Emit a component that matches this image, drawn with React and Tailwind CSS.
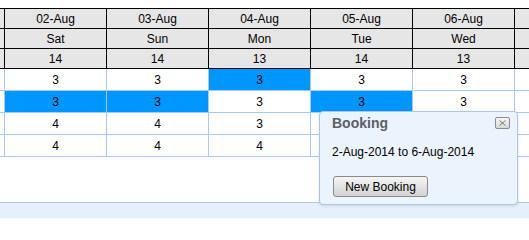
const days = [
    { date: "02-Aug", day: "Sat", count: 14 },
    { date: "03-Aug", day: "Sun", count: 14 },
    { date: "04-Aug", day: "Mon", count: 13 },
    { date: "05-Aug", day: "Tue", count: 14 },
    { date: "06-Aug", day: "Wed", count: 13 },
];

// each row: values per day + which cells are selected
// (cells hidden behind the popup are left blank)
const rows = [
    { values: [3, 3, 3, 3, 3], selected: [2] },
    { values: [3, 3, 3, 3, 3], selected: [0, 1, 3] },
    { values: [4, 4, 3, null, null], selected: [] },
    { values: [4, 4, 4, null, null], selected: [] },
];

const HeaderRow = ({ field }) => (
    <div className="flex h-[20px] border-b border-black bg-[#e6e6e6]">
        <div className="w-[5px] shrink-0 border-r border-black" />
        {days.map((d) => (
            <div
                key={d.date}
                className="flex w-[102px] shrink-0 items-center justify-center border-r border-black"
            >
                {d[field]}
            </div>
        ))}
        <div className="flex-1" />
    </div>
);

const BodyRow = ({ row }) => (
    <div className="flex h-[22px] border-b border-[#a9c8f7]">
        <div className="w-[5px] shrink-0 border-r border-[#a9c8f7]" />
        {row.values.map((v, i) => (
            <div
                key={i}
                className={
                    row.selected.includes(i)
                        ? "flex w-[102px] shrink-0 items-center justify-center border-r border-[#a9c8f7] bg-[#0096ff]"
                        : "flex w-[102px] shrink-0 items-center justify-center border-r border-[#a9c8f7]"
                }
            >
                {v}
            </div>
        ))}
        <div className="flex-1" />
    </div>
);

const BookingPopup = () => (
    <div className="absolute left-[319px] top-[111px] h-[94px] w-[199px] rounded-[4px] border border-[#afc6df] bg-[#ebf3fd] pl-[12px] pt-[3px] shadow-[0_1px_3px_rgba(0,0,0,0.12)]">
        <div className="text-[14px] font-bold leading-[16px] text-[#5b5f66]">Booking</div>
        <button className="absolute right-[7px] top-[5px] flex h-[12px] w-[15px] items-center justify-center rounded-[2px] border border-[#8c8c8c] bg-gradient-to-b from-[#f6f6f6] to-[#d8d8d8]">
            <svg width="7" height="6" viewBox="0 0 7 6">
                <path d="M0.5 0.5 L6.5 5.5 M6.5 0.5 L0.5 5.5" stroke="#7a7a7a" strokeWidth="1" />
            </svg>
        </button>
        <div className="mt-[13px] leading-[16px]">2-Aug-2014 to 6-Aug-2014</div>
        <button className="ml-[1px] mt-[16px] flex h-[21px] w-[95px] items-center justify-center rounded-[3px] border border-[#8a8a8a] bg-gradient-to-b from-[#f5f5f5] to-[#d3d3d3] text-[12px] text-black">
            New Booking
        </button>
    </div>
);

const App = () => {
    return (
        <div className="relative h-[218px] w-[529px] overflow-hidden bg-white font-['Liberation_Sans',Arial,sans-serif] text-[12px] text-black">
            <div className="h-[203px] border-b border-[#b4c6dc] pt-[8px]">
                <div className="border-t border-black">
                    <HeaderRow field="date" />
                    <HeaderRow field="day" />
                    <HeaderRow field="count" />
                </div>
                {rows.map((row, i) => (
                    <BodyRow key={i} row={row} />
                ))}
            </div>
            <div className="h-[15px] bg-[#e6f0fc]" />

            <BookingPopup />
        </div>
    );
};

export default App;
